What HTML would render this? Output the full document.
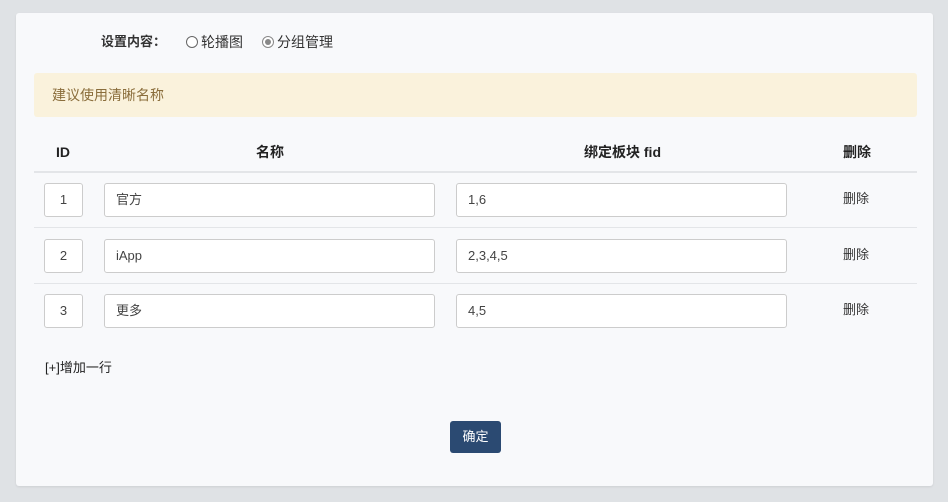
<!DOCTYPE html><html><head><meta charset="utf-8"><style>
body{margin:0;width:948px;height:502px;background:#dfe2e5;font-family:"Liberation Sans","Noto Sans CJK SC",sans-serif;font-size:14px;line-height:20px;color:#333;position:relative;overflow:hidden}
.card{position:absolute;left:16px;top:13px;width:917px;height:473px;background:#f8f9fb;border-radius:3px;box-shadow:0 1px 2px rgba(0,0,0,.08)}
.a{position:absolute}
.alert{left:34px;top:73px;width:883px;height:44px;background:#faf2dc;border-radius:3px;color:#8a6d3b;line-height:44px;text-indent:18px}
.th{font-weight:bold;color:#222;top:142px}
.line{left:34px;width:883px;height:1px;background:#e3e5e8}
.in{background:#fff;border:1px solid #ccc;border-radius:3px;box-sizing:border-box;height:34px;line-height:32px;padding-left:11px;color:#444;font-size:13px}
.id{width:39px;padding:0;text-align:center}
.radio{display:inline-block;width:12px;height:12px;border:1px solid #666;border-radius:50%;box-sizing:border-box;vertical-align:-1px;margin-right:3px;position:relative;background:#fff}
.on{border-color:#888}
.on::after{content:"";position:absolute;left:2px;top:2px;width:6px;height:6px;border-radius:50%;background:#888}
.btn{left:450px;top:421px;width:51px;height:32px;background:#2b4a72;color:#fff;border-radius:3px;text-align:center;line-height:32px;font-size:13px}
</style></head><body>
<div class="card"></div>
<div class="a" style="left:101px;top:32px;font-weight:bold;color:#333;font-size:13px">设置内容：</div>
<div class="a" style="left:186px;top:32px"><span class="radio"></span>轮播图</div>
<div class="a" style="left:262px;top:32px"><span class="radio on"></span>分组管理</div>
<div class="a alert">建议使用清晰名称</div>
<div class="a th" style="left:56px">ID</div>
<div class="a th" style="left:256px">名称</div>
<div class="a th" style="left:584px">绑定板块 fid</div>
<div class="a th" style="left:843px">删除</div>
<div class="a line" style="top:171px;height:2px"></div>
<div class="a in id" style="left:44px;top:183px">1</div><div class="a in" style="left:104px;top:183px;width:331px">官方</div><div class="a in" style="left:456px;top:183px;width:331px">1,6</div><div class="a" style="left:843px;top:189px;font-size:13px">删除</div>
<div class="a line" style="top:227px"></div>
<div class="a in id" style="left:44px;top:239px">2</div><div class="a in" style="left:104px;top:239px;width:331px">iApp</div><div class="a in" style="left:456px;top:239px;width:331px">2,3,4,5</div><div class="a" style="left:843px;top:245px;font-size:13px">删除</div>
<div class="a line" style="top:283px"></div>
<div class="a in id" style="left:44px;top:294px">3</div><div class="a in" style="left:104px;top:294px;width:331px">更多</div><div class="a in" style="left:456px;top:294px;width:331px">4,5</div><div class="a" style="left:843px;top:300px;font-size:13px">删除</div>
<div class="a" style="left:45px;top:358px;color:#222;font-size:13px">[+]增加一行</div>
<div class="a btn">确定</div>
</body></html>
